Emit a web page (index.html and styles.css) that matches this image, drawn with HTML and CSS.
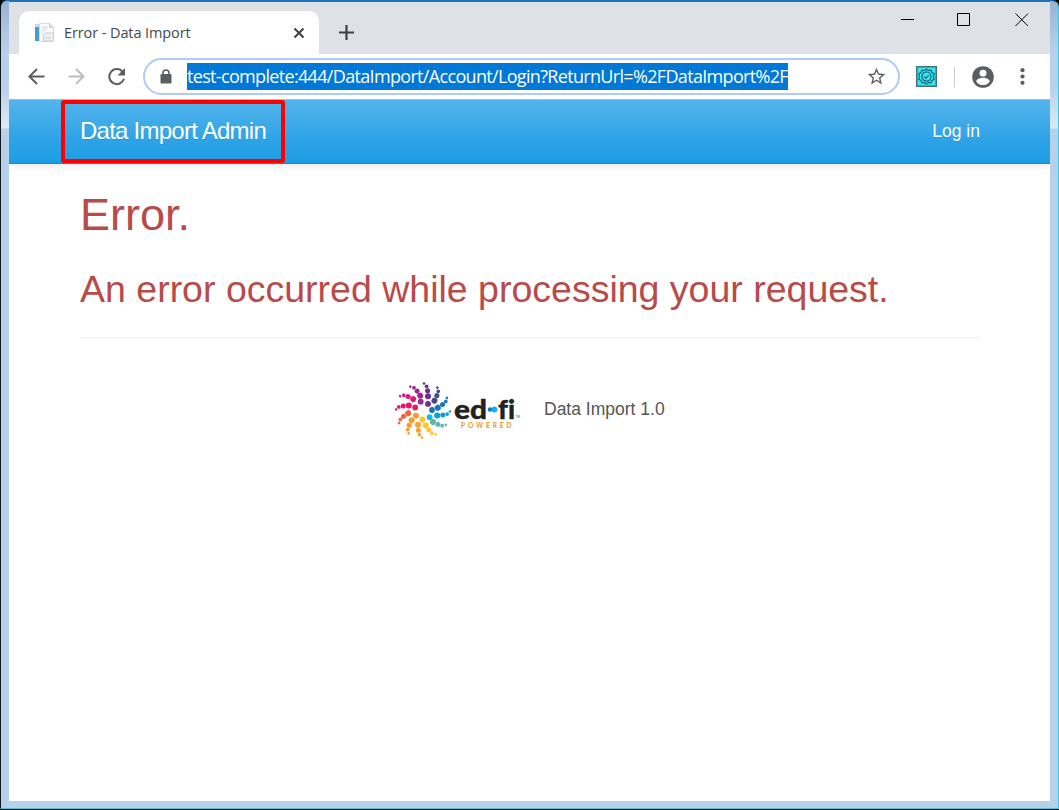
FILE: index.html
```html
<!DOCTYPE html>
<html lang="en">
<head>
<meta charset="utf-8">
<title>Error - Data Import</title>
<link rel="stylesheet" href="styles.css">
</head>
<body>
<div class="window">
  <header class="tabstrip">
    <div class="tab">
      <svg class="favicon" width="20" height="20" viewBox="0 0 20 20"><rect x="1" y="2" width="4" height="16" fill="#4a9bd0"/><path d="M1 1h4v3H1z" fill="#c5dbe9"/><path d="M5.500 .5h10l4 4v14h-14z" fill="#fafbfc" stroke="#d6dce1"/><path d="M15.500 .5v4h4" fill="#ddd" stroke="#c9d0d6"/><path d="M8 4h6M8 6h5M8 8h3M8 10h2M8 12h1" stroke="#cddbe5"/><path d="M9.500 13l2-3h8v8h-10z" fill="#eef0f2" stroke="#c8ced3"/><path d="M11 15h6" stroke="#c5cbd0"/></svg>
      <span class="tab-title">Error - Data Import</span>
      <svg class="tab-close" width="12" height="12" viewBox="0 0 12 12"><path d="M1.500 1.500l9 9M10.500 1.500l-9 9" stroke="#3c4043" stroke-width="2"/></svg>
    </div>
    <svg class="new-tab" width="16" height="16" viewBox="0 0 16 16"><path d="M7.500 0v15M0 7.500h15" stroke="#3c4043" stroke-width="2.200"/></svg>
    <div class="controls">
      <svg width="14" height="14" viewBox="0 0 14 14"><path d="M0 6.500h13" stroke="#000"/></svg>
      <svg width="14" height="14" viewBox="0 0 14 14"><path d="M.5 .5h12v12H.5z" fill="none" stroke="#000"/></svg>
      <svg width="14" height="14" viewBox="0 0 14 14"><path d="M.5 .5l12.500 12.500M13 .5L.5 13" stroke="#000"/></svg>
    </div>
  </header>
  <div class="toolbar">
    <svg class="nav-icon" width="18" height="18" viewBox="0 0 18 18" fill="none" stroke="#5a5e63" stroke-width="2"><path d="M16.500 8.500H2M9 1L1.500 8.500 9 16"/></svg>
    <svg class="nav-icon" width="18" height="18" viewBox="0 0 18 18" fill="none" stroke="#bcbec1" stroke-width="2"><path d="M.5 8.500H15M8 1l7.500 7.500L8 16"/></svg>
    <svg class="nav-icon" width="18" height="18" viewBox="0 0 18 18"><path d="M14.600 3.800A7.500 7.500 0 1 0 16 10.800" fill="none" stroke="#5a5e63" stroke-width="2"/><path d="M17 0v7.500H9.500z" fill="#5a5e63"/></svg>
    <div class="omnibox">
      <svg class="lock" width="12" height="15" viewBox="0 0 12 15"><path d="M3 6V4a3 3 0 0 1 6 0v2" fill="none" stroke="#5a5e63" stroke-width="1.600"/><rect x=".5" y="5" width="11" height="9.500" rx="1.200" fill="#5a5e63"/></svg>
      <span class="url">test-complete:444/DataImport/Account/Login?ReturnUrl=%2FDataImport%2F</span>
      <svg class="star" width="21" height="21" viewBox="0 0 24 24"><path d="M22 9.240l-7.190-.62L12 2 9.190 8.630 2 9.240l5.460 4.730L5.820 21 12 17.270 18.180 21l-1.630-7.030L22 9.240zM12 15.400l-3.760 2.270 1-4.280-3.320-2.880 4.380-.38L12 6.100l1.710 4.040 4.380.38-3.320 2.880 1 4.280L12 15.400z" fill="#5a5e63"/></svg>
    </div>
    <svg class="extension" width="21" height="21" viewBox="0 0 21 21"><rect x=".75" y=".75" width="19.500" height="19.500" fill="#35e8ee" stroke="#466f7d" stroke-width="1.500"/><g fill="none" stroke="#16647a" stroke-width="1.200"><path d="M10.500 3l2 1.500 2.500-.3 1 2.300 2.200 1.200-.8 2.800.8 2.800-2.200 1.200-1 2.300-2.500-.3-2 1.500-2-1.500-2.500.3-1-2.300-2.200-1.200.8-2.800-.8-2.800L5 6.500l1-2.300 2.500.3z"/><circle cx="10.500" cy="10.500" r="4.600"/><path d="M8.300 10.500l1.700 1.700 3-3"/></g></svg>
    <span class="divider"></span>
    <svg class="avatar" width="22" height="22" viewBox="0 0 22 22"><circle cx="11" cy="11" r="10.800" fill="#5a5e63"/><circle cx="11" cy="7.200" r="3.400" fill="#fff"/><path d="M4.200 15.500c0-2.500 4.300-3.800 6.800-3.800s6.800 1.300 6.800 3.800a8.200 8.200 0 0 1-13.600 0z" fill="#fff"/></svg>
    <svg class="menu" width="5" height="17" viewBox="0 0 5 17" fill="#5a5e63"><circle cx="2.500" cy="2.200" r="2.100"/><circle cx="2.500" cy="8.500" r="2.100"/><circle cx="2.500" cy="14.800" r="2.100"/></svg>
  </div>
  <nav class="navbar">
    <a class="brand">Data Import Admin</a>
    <a class="login">Log in</a>
  </nav>
  <main class="content">
    <h1>Error.</h1>
    <h2>An error occurred while processing your request.</h2>
    <hr>
    <footer class="footer">
      <svg class="logo" width="126" height="60" viewBox="0 0 126 60">
        <defs><g id="arm"><circle cx="5" cy="-14.200" r="3"/><circle cx="4.600" cy="-19.800" r="2.500"/><circle cx="3.600" cy="-24.200" r="1.850"/><circle cx="1" cy="-27" r="1.300"/></g></defs>
        <g transform="translate(28 30.500)">
          <use href="#arm" fill="#6a2d91"/>
          <use href="#arm" fill="#44498d" transform="rotate(30)"/>
          <use href="#arm" fill="#1474c0" transform="rotate(60)"/>
          <use href="#arm" fill="#08a3c6" transform="rotate(90)"/>
          <use href="#arm" fill="#5cb9a5" transform="rotate(120)"/>
          <use href="#arm" fill="#fcc62e" transform="rotate(150)"/>
          <use href="#arm" fill="#f8a42a" transform="rotate(180)"/>
          <use href="#arm" fill="#f69a2d" transform="rotate(210)"/>
          <use href="#arm" fill="#ef663b" transform="rotate(240)"/>
          <use href="#arm" fill="#e81767" transform="rotate(270)"/>
          <use href="#arm" fill="#d91a7a" transform="rotate(300)"/>
          <use href="#arm" fill="#a02791" transform="rotate(330)"/>
          <circle cx="-2.300" cy="-8.800" r="2.900" fill="#a02791"/>
          <circle cx="5" cy="-6.600" r="2.900" fill="#6a2d91"/>
          <circle cx="9" cy="-.5" r="2.900" fill="#1474c0"/>
          <circle cx="6.600" cy="6.700" r="2.900" fill="#17b7ec"/>
          <circle cx="-.7" cy="9" r="2.900" fill="#fcc62e"/>
          <circle cx="-7" cy="5.200" r="2.900" fill="#f69a2d"/>
          <circle cx="-7.800" cy="-3" r="2.900" fill="#e81767"/>
        </g>
        <text class="logo-name" x="59" y="39" textLength="33" lengthAdjust="spacingAndGlyphs">ed</text>
        <path d="M95 29.500h6" stroke="#11a4e0" stroke-width="2"/><circle cx="95" cy="29.500" r="2.200" fill="#1474c0"/><circle cx="99.500" cy="29.500" r="2.900" fill="#13b1ea"/>
        <text class="logo-name" x="103" y="39" textLength="17" lengthAdjust="spacingAndGlyphs">fi</text>
        <text class="logo-tm" x="120.500" y="38">TM</text>
        <text class="logo-sub" x="66" y="48" textLength="50.500">POWERED</text>
      </svg>
      <span>Data Import 1.0</span>
    </footer>
  </main>
</div>
</body>
</html>
```
FILE: styles.css
```css
* { box-sizing: border-box; }
body {
  margin: 0;
  background: #000;
  font-family: "Liberation Sans", Arial, sans-serif;
  font-size: 17.5px;
}
.window {
  width: 1059px;
  height: 809px;
  padding: 1px 8px 7px;
  border: 1px solid #35cbe0;
  border-top-color: #1b6fb5;
  border-left-color: #101820;
  border-radius: 7px 7px 0 0;
  background: linear-gradient(#97b3d3, #b9d0e9 50px, #b9d0e9 85px, #dce9f7 127px, #b9d0e9 128px);
}
.tabstrip {
  display: flex;
  height: 52px;
  padding-top: 9px;
  background: #dee1e6;
  box-shadow: 0 -1px #1979ca;
}
.tab {
  display: flex;
  align-items: center;
  width: 300px;
  height: 43px;
  margin-left: 10px;
  padding: 1px 14px 0 15px;
  border-radius: 10px 10px 0 0;
  background: #fff;
}
.tab-title {
  flex: 1;
  margin: -2px 0 0 10px;
  font: 14.5px "Open Sans", sans-serif;
  letter-spacing: -.1px;
  color: #45494d;
}
.new-tab { margin: 14px 0 0 20px; }
.controls {
  display: flex;
  gap: 43px;
  margin: 2px 21px 0 auto;
}
.controls svg:nth-child(2) { margin: 0 1px 0 -1px; }
.toolbar {
  display: flex;
  align-items: center;
  height: 46px;
  padding: 0 25px 0 19px;
  border-bottom: 1px solid #bcb9b7;
  background: #fff;
}
.nav-icon { margin-right: 22px; }
.omnibox {
  display: flex;
  align-items: center;
  width: 757px;
  height: 37px;
  margin-left: -5px;
  padding: 0 11px 0 15px;
  border: 2px solid #aecbfa;
  border-radius: 19px;
}
.url {
  width: 601px;
  height: 27px;
  margin-left: 15px;
  background: #0078d7;
  color: #fff;
  font: 18px/27px "Open Sans", sans-serif;
  letter-spacing: -.67px;
  white-space: nowrap;
}
.star { margin-left: auto; }
.extension { margin-left: 16px; }
.divider { width: 1px; height: 20px; margin: 0 17px; background: #c9cbce; }
.menu { margin-left: auto; }
.navbar {
  position: relative;
  display: flex;
  align-items: flex-start;
  justify-content: space-between;
  height: 64px;
  padding-right: 70px;
  padding-left: 52px;
  border-bottom: 1px solid #1787cd;
  background: linear-gradient(#54b4eb, #2fa4e7 60%, #1d9ce5);
  box-shadow: 0 1px 10px rgba(0, 0, 0, .1);
  clip-path: inset(0 0 -14px 0);
  color: #fff;
  text-shadow: 0 1px rgba(0, 0, 0, .1);
}
.login { line-height: 62px; }
.brand {
  width: 224px;
  height: 63px;
  padding-left: 15px;
  border: 4px solid #f00;
  border-radius: 3px;
  font-size: 24px;
  letter-spacing: -.75px;
  line-height: 54px;
}
.content {
  height: 637px;
  padding: 0 71px;
  background: #fff;
  color: #b94a48;
}
h1, h2 { margin: 0; font-weight: 400; }
h1 { padding-top: 26px; font-size: 45px; line-height: 50px; }
h2 { padding-top: 28px; font-size: 37.5px; line-height: 42px; }
hr { height: 1px; margin: 27px -1px 0 0; border: 0; background: #eee; }
.footer {
  display: flex;
  align-items: center;
  gap: 23px;
  margin: 42px 0 0 315px;
  color: #555;
}
.footer span { margin-top: -2px; }
.logo-name { fill: #222; stroke: #222; stroke-width: .4px; font: 900 27px/1 Lato, sans-serif; font-variant-ligatures: none; }
.logo-sub { fill: #f69a2d; font: 900 6.5px/1 Lato, sans-serif; }
.logo-tm { fill: #444; font: 3px/1 Lato, sans-serif; }
```
